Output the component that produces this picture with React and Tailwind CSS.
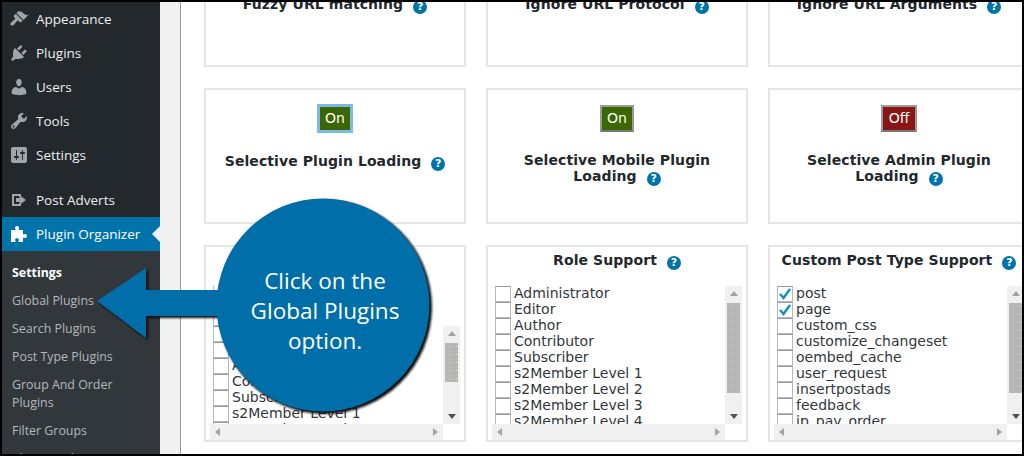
const menuItems = [
    { label: "Appearance", icon: "M14.48 11.06L7.41 3.99l1.5-1.5c.5-.56 2.3-.47 3.51.32 1.21.8 1.43 1.28 2.91 2.1 1.18.64 2.45 1.26 4.45.85zm-.71.71L6.7 4.7 4.93 6.47c-.39.39-.39 1.02 0 1.41l1.06 1.06c.39.39.39 1.03 0 1.42-.6.6-1.43 1.11-2.21 1.69-.35.26-.7.53-1.01.84C1.43 13.23 1 15 2 16.5c.5.7 2.6-.2 3.5-1.2.3-.4.6-.8.9-1.2.6-.8 1.1-1.6 1.7-2.2.39-.39 1.03-.39 1.42 0l1.06 1.06c.39.39 1.02.39 1.41 0z" },
    { label: "Plugins", icon: "M13.11 4.36L9.87 7.6 8 5.73l3.24-3.24c.35-.34 1.05-.2 1.56.32.52.51.66 1.21.31 1.55zm-8 1.77l.91-1.12 9.01 9.01-1.19.84c-.71.71-2.63 1.16-3.82 1.16H6.14L4.9 17.26c-.59.59-1.54.59-2.12 0-.59-.58-.59-1.53 0-2.12l1.24-1.24v-3.88c0-1.13.4-3.19 1.09-3.89zm7.26 3.97l3.24-3.24c.34-.35 1.04-.21 1.55.31.52.51.66 1.21.31 1.55l-3.24 3.25z" },
    { label: "Users", icon: "M10 9.25c-2.27 0-2.73-3.44-2.73-3.44C7 4.02 7.82 2 9.97 2c2.16 0 2.98 2.02 2.71 3.81 0 0-.41 3.44-2.68 3.44zm0 2.57L12.72 10c2.39 0 4.52 2.33 4.52 4.53v2.49s-3.65 1.13-7.24 1.13c-3.65 0-7.24-1.13-7.24-1.13v-2.49c0-2.25 1.94-4.48 4.47-4.48z" },
    { label: "Tools", icon: "M16.68 9.77c-1.34 1.34-3.3 1.67-4.95.99l-5.41 6.52c-.99.99-2.59.99-3.58 0s-.99-2.59 0-3.57l6.52-5.42c-.68-1.65-.35-3.61.99-4.95 1.28-1.28 3.12-1.62 4.72-1.06l-2.89 2.89 2.82 2.82 2.86-2.87c.53 1.58.18 3.39-1.08 4.65zM3.81 16.21c.4.39 1.04.39 1.43 0 .4-.4.4-1.04 0-1.43-.39-.4-1.03-.4-1.43 0-.39.39-.39 1.03 0 1.43z" },
    { label: "Settings", icon: "M18 16V4c0-1.1-.9-2-2-2H4c-1.1 0-2 .9-2 2v12c0 1.1.9 2 2 2h12c1.1 0 2-.9 2-2zM8 11h1c.55 0 1 .45 1 1s-.45 1-1 1H8v1.5c0 .28-.22.5-.5.5s-.5-.22-.5-.5V13H6c-.55 0-1-.45-1-1s.45-1 1-1h1V5.5c0-.28.22-.5.5-.5s.5.22.5.5V11zm5-2h-1c-.55 0-1-.45-1-1s.45-1 1-1h1V5.5c0-.28.22-.5.5-.5s.5.22.5.5V7h1c.55 0 1 .45 1 1s-.45 1-1 1h-1v5.5c0 .28-.22.5-.5.5s-.5-.22-.5-.5V9z" },
];

const subItems = ["Global Plugins", "Search Plugins", "Post Type Plugins", "Group And Order Plugins", "Filter Groups", "Plugin Audit"];
const roles = ["Administrator", "Editor", "Author", "Contributor", "Subscriber", "s2Member Level 1", "s2Member Level 2", "s2Member Level 3", "s2Member Level 4"];
const postTypes = ["post", "page", "custom_css", "customize_changeset", "oembed_cache", "user_request", "insertpostads", "feedback", "jp_pay_order"];

function MenuIcon({ d, className = "text-[#a0a5aa]" }) {
    return (
        <svg viewBox="0 0 20 20" className={`w-5 h-5 shrink-0 fill-current ${className}`}>
            <path d={d} />
        </svg>
    );
}

function MenuRow({ label, icon }) {
    return (
        <div className="flex items-center h-[34px] pl-[7px] gap-[7px] text-[13.5px] text-[#eeeeee]">
            <MenuIcon d={icon} />
            <span>{label}</span>
        </div>
    );
}

function Sidebar() {
    return (
        <aside className="w-[158px] shrink-0 h-full bg-[#23282d] font-['Open_Sans',sans-serif]">
            {menuItems.map((item) => (
                <MenuRow key={item.label} {...item} />
            ))}
            <div className="h-[11px]" />
            <MenuRow label="Post Adverts" icon="M3 4h9v3h-2V6H5v8h5v-1h2v3H3zM11 8V5.5l6 4.5-6 4.5V12H7V8z" />
            <div className="relative flex items-center h-[34px] pl-[7px] gap-[7px] text-[13.5px] text-white bg-[#0073aa]">
                <MenuIcon
                    className="text-white"
                    d="M8 2c1.3 0 2 .8 2 1.8 0 .7-.4 1.1-.4 1.7 0 .3.2.5.6.5H14v4c0 .4.3.6.6.6.5 0 .9-.5 1.6-.5 1 0 1.8.8 1.8 2s-.8 2-1.8 2c-.7 0-1.1-.5-1.6-.5-.3 0-.6.2-.6.6V18H10c-.4 0-.6-.3-.6-.6 0-.6.5-.9.5-1.6 0-.9-.8-1.5-1.9-1.5s-1.9.6-1.9 1.5c0 .7.5 1 .5 1.6 0 .3-.2.6-.6.6H2V6h4c.4 0 .6-.2.6-.5 0-.6-.5-1-.5-1.7C6.100 2.800 6.700 2 8 2z"
                />
                <span>Plugin Organizer</span>
                <div className="absolute right-0 top-[9px] w-0 h-0 border-y-[8px] border-y-transparent border-r-[8px] border-r-[#f1f1f1]" />
            </div>
            <div className="bg-[#32373c] h-[300px] pt-[8px] pl-[10px] pr-2 text-[12.4px] leading-[18px] text-[#b4b9be]">
                <div className="py-[5px] font-bold text-white">Settings</div>
                {subItems.map((item) => (
                    <div key={item} className="py-[5px]">
                        {item}
                    </div>
                ))}
            </div>
        </aside>
    );
}

function Help() {
    return (
        <span className="inline-flex items-center justify-center w-[14px] h-[14px] ml-[10px] align-[-1px] rounded-full bg-[#0073aa] text-white text-[11px] leading-none font-bold">
            ?
        </span>
    );
}

function Toggle({ label, on, focused }) {
    return (
        <div
            className={`inline-block h-[27px] border-[2px] text-[14px] leading-[22px] text-white ${on ? "px-[5px] bg-[#3b6600]" : "px-[6px] bg-[#8b1515]"} ${focused ? "border-[#7db9e8] shadow-[0_0_0_1px_#7db9e8]" : "border-[#9a9a9a] border-b-[#777777]"}`}
        >
            {label}
        </div>
    );
}

function Title({ children }) {
    return <div className="text-[14px] leading-[16px] font-bold tracking-[0.08px] text-[#23282d] text-center">{children}</div>;
}

function ToggleCard({ title, toggle, lift }) {
    return (
        <div className="h-[136px] border-2 border-[#e5e5e5] bg-white flex flex-col items-center">
            {toggle && (
                <div className={`mt-[15px] ${lift ? "mb-[20px]" : "mb-[21px]"}`}>
                    <Toggle {...toggle} />
                </div>
            )}
            <div className={toggle ? "px-3" : "mt-[63px] px-3"}>
                <Title>
                    {title}
                    <Help />
                </Title>
            </div>
        </div>
    );
}

function Arrow({ d }) {
    return (
        <svg viewBox="0 0 10 10" className="w-[10px] h-[10px] fill-current">
            <path d={d} />
        </svg>
    );
}

function CheckRow({ label, checked }) {
    return (
        <div className="flex h-4 text-[14px] leading-[14px] text-[#32373c] whitespace-nowrap">
            <div className="relative w-4 h-4 shrink-0 bg-white border border-[#b4b9be] border-t-[#999999] mr-[3px]">
                {checked && (
                    <svg viewBox="0 0 16 16" className="absolute -left-[1px] -top-[1px] w-4 h-4 fill-none stroke-[#1e8cbe] stroke-[2.5]">
                        <path d="M3 8l3.500 4L13 3" />
                    </svg>
                )}
            </div>
            {label}
        </div>
    );
}

function ListCard({ title, rows, checked = [], blanks = 0, thumbTop = 17, thumbHeight = 90, trackTop = 0 }) {
    return (
        <div className="h-[197px] border-2 border-[#e5e5e5] bg-white pl-1">
            <div className="h-[39px] pt-[5px] pr-1">
                {title && (
                    <Title>
                        {title}
                        <Help />
                    </Title>
                )}
            </div>
            <div className="flex h-[138px] relative">
                <div className="w-[233px] h-full pl-[3px] overflow-hidden">
                    {blanks > 0 && <div className="-mt-2" />}
                    {Array.from({ length: blanks }).map((_, i) => (
                        <CheckRow key={i} label="" />
                    ))}
                    {rows.map((row) => (
                        <CheckRow key={row} label={row} checked={checked.includes(row)} />
                    ))}
                </div>
                <div className="w-[17px] h-full shrink-0 flex flex-col" style={{ paddingTop: trackTop }}>
                    <div className="relative flex-1 bg-[#f0f0f0] flex flex-col items-center justify-between py-[3px] text-[#a3a3a3]">
                        <Arrow d="M5 2l4 5H1z" />
                        <div
                            className="absolute left-[2px] w-[13px] bg-[#b6b6b6] bg-[radial-gradient(circle_at_0.5px_0.5px,#eeeca8_0.5px,transparent_0.5px)] bg-[length:7px_8px] bg-[position:4px_3px]"
                            style={{ top: thumbTop, height: thumbHeight }}
                        />
                        <div className="text-[#505050]">
                            <Arrow d="M5 8L1 3h8z" />
                        </div>
                    </div>
                </div>
            </div>
            <div className="w-[233px] h-[16px] bg-[#f0f0f0] flex items-center justify-between px-[3px] text-[#a3a3a3]">
                <Arrow d="M2 5l5-4v8z" />
                <Arrow d="M8 5L3 1v8z" />
            </div>
        </div>
    );
}

function Callout() {
    return (
        <>
            <svg className="absolute left-0 top-0 w-[1020px] h-[452px] pointer-events-none" viewBox="0 0 1020 452">
                <defs>
                    <filter id="callout-shadow" x="-10%" y="-10%" width="120%" height="120%">
                        <feGaussianBlur stdDeviation="0.8" />
                    </filter>
                </defs>
                <g fill="#111111" transform="translate(2 2)" filter="url(#callout-shadow)">
                    <path d="M95 299L144 266V288H240V314H144V336z" />
                    <circle cx="321" cy="303" r="107" />
                </g>
                <path fill="#006ea8" d="M95 299L144 266V288H240V314H144V336z" />
                <circle fill="#006ea8" cx="321" cy="303" r="106.500" />
            </svg>
            <div className="absolute left-[221px] top-[264px] w-[204px] text-center text-white text-[22.5px] leading-[30px] font-['Open_Sans',sans-serif]">
                Click on the
                <br />
                Global Plugins
                <br />
                option.
            </div>
        </>
    );
}

export default function App() {
    return (
        <div className="relative w-[1024px] h-[456px] border-2 border-black overflow-hidden flex bg-white font-['DejaVu_Sans',sans-serif]">
            <Sidebar />
            <div className="w-5 shrink-0 bg-[#f1f1f1] border-r border-[#999999] box-content" />
            <main className="flex-1 pl-[23px] overflow-hidden">
                <div className="grid grid-cols-[262px_262px_262px] gap-x-5 gap-y-[21px] w-[826px] -mt-[71px]">
                    <ToggleCard title="Fuzzy URL matching" />
                    <ToggleCard title="Ignore URL Protocol" />
                    <ToggleCard title="Ignore URL Arguments" />
                    <ToggleCard title="Selective Plugin Loading" toggle={{ label: "On", on: true, focused: true }} />
                    <ToggleCard title="Selective Mobile Plugin Loading" toggle={{ label: "On", on: true }} lift />
                    <ToggleCard title="Selective Admin Plugin Loading" toggle={{ label: "Off" }} lift />
                    <ListCard rows={roles.slice(0, 7)} blanks={3} thumbTop={17} thumbHeight={39} trackTop={40} />
                    <ListCard title="Role Support" rows={roles} />
                    <ListCard title="Custom Post Type Support" rows={postTypes} checked={["post", "page"]} />
                </div>
            </main>
            <Callout />
        </div>
    );
}
